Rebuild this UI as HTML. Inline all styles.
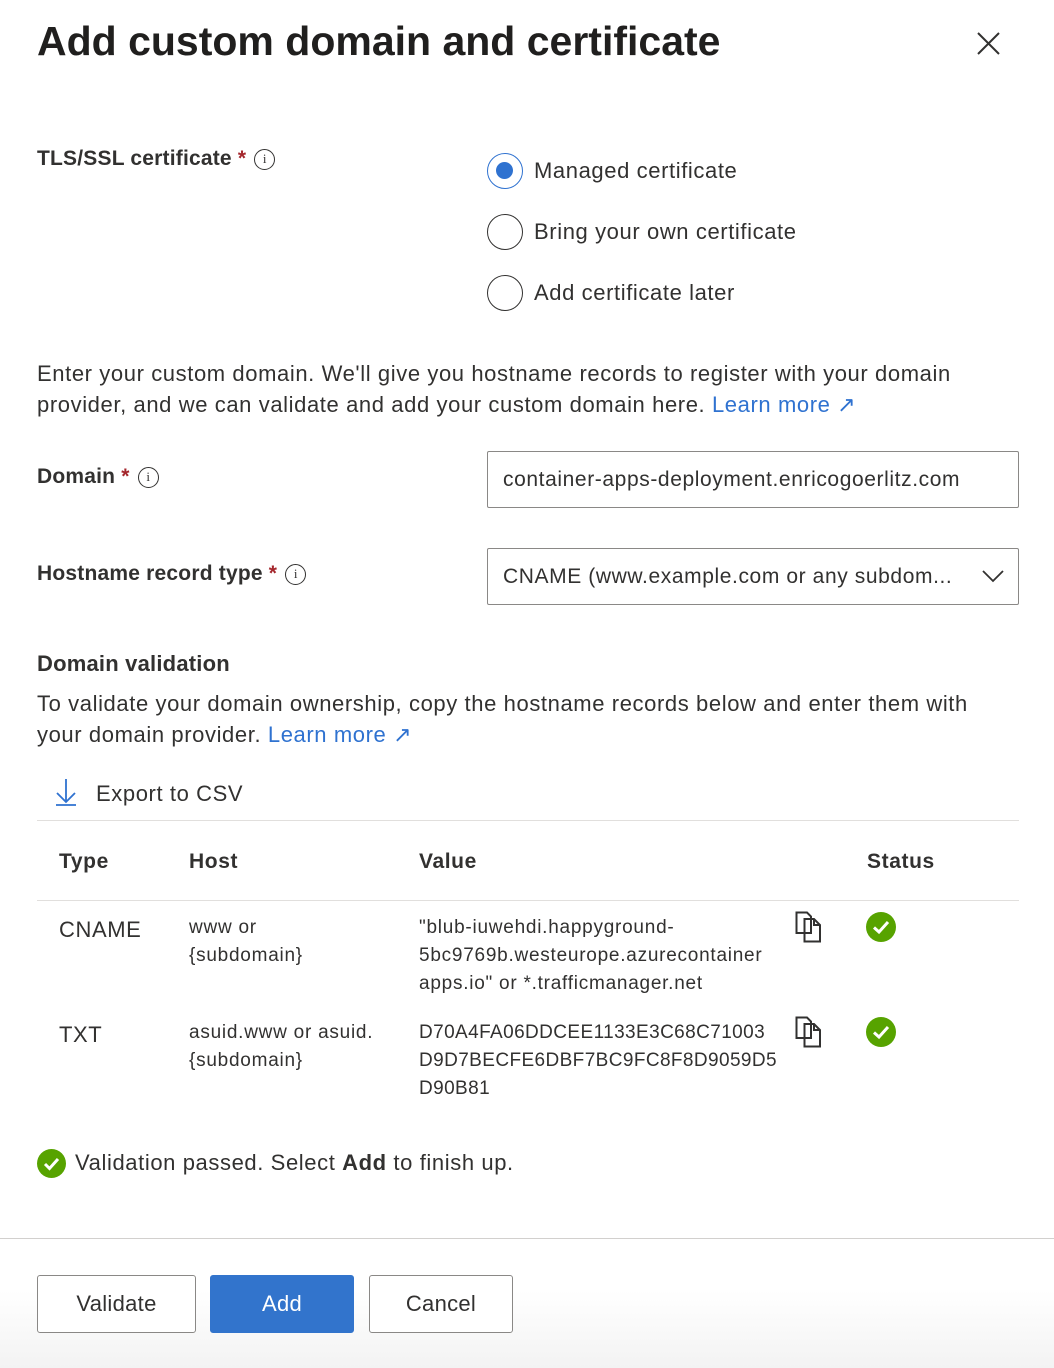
<!DOCTYPE html>
<html><head><meta charset="utf-8"><style>
*{box-sizing:border-box;margin:0;padding:0}
body{width:1054px;height:1368px;background:#fff;font-family:"Liberation Sans",sans-serif;color:#323130;position:relative;overflow:hidden;font-size:22px;letter-spacing:0.6px}
.a{position:absolute;white-space:nowrap}
h1{position:absolute;left:37px;top:18px;font-size:41px;font-weight:bold;color:#201f1e;letter-spacing:0}
.lbl{font-weight:bold;font-size:21px;letter-spacing:0.2px}
.req{color:#a4262c}
.info{display:inline-block;width:21px;height:21px;border:1.5px solid #323130;border-radius:50%;font-size:13px;text-align:center;line-height:18px;vertical-align:2px;margin-left:8px;font-weight:normal;font-family:"Liberation Serif",serif;letter-spacing:0}
.radio{position:absolute;width:36px;height:36px;border:1.5px solid #323130;border-radius:50%}
.radio.on{border-color:#2f72d0}
.radio.on:after{content:"";position:absolute;left:8px;top:8px;width:17px;height:17px;border-radius:50%;background:#2f72d0}
.link{color:#2f72d0}
.box{position:absolute;left:487px;width:532px;height:57px;border:1px solid #8a8886;border-radius:2px;padding:0 15px;line-height:55px;font-size:21px;letter-spacing:0.6px}
.btn{position:absolute;top:1275px;height:58px;border:1px solid #8a8886;border-radius:3px;text-align:center;line-height:56px;font-size:22px;color:#323130;background:#fff;letter-spacing:0.3px}
.chk{position:absolute;width:30px;height:30px;border-radius:50%;background:#57a300}
.chk svg{position:absolute;left:0;top:0}
.sm{font-size:19px;line-height:28px;letter-spacing:0.75px}
.th{font-weight:bold;font-size:21px}
</style></head><body>
<h1>Add custom domain and certificate</h1>
<svg class="a" style="left:976px;top:31px" width="25" height="25"><path d="M2 2L23 23M23 2L2 23" stroke="#323130" stroke-width="2"/></svg>

<div class="a lbl" style="left:37px;top:147px">TLS/SSL certificate <span class="req">*</span><span class="info">i</span></div>
<div class="radio on" style="left:487px;top:153px"></div><div class="a" style="left:534px;top:158px">Managed certificate</div>
<div class="radio" style="left:487px;top:214px"></div><div class="a" style="left:534px;top:219px">Bring your own certificate</div>
<div class="radio" style="left:487px;top:275px"></div><div class="a" style="left:534px;top:280px">Add certificate later</div>

<div class="a" style="left:37px;top:358px;line-height:31px">Enter your custom domain. We'll give you hostname records to register with your domain<br>provider, and we can validate and add your custom domain here. <span class="link">Learn more ↗</span></div>

<div class="a lbl" style="left:37px;top:465px">Domain <span class="req">*</span><span class="info">i</span></div>
<div class="box" style="top:451px">container-apps-deployment.enricogoerlitz.com</div>
<div class="a lbl" style="left:37px;top:562px">Hostname record type <span class="req">*</span><span class="info">i</span></div>
<div class="box" style="top:548px">CNAME (www.example.com or any subdom...</div>
<svg class="a" style="left:982px;top:569px" width="22" height="14"><path d="M1 2L11 12L21 2" stroke="#323130" stroke-width="1.8" fill="none"/></svg>

<div class="a lbl" style="left:37px;top:651px;font-size:22px">Domain validation</div>
<div class="a" style="left:37px;top:688px;line-height:31px">To validate your domain ownership, copy the hostname records below and enter them with<br>your domain provider. <span class="link">Learn more ↗</span></div>

<svg class="a" style="left:55px;top:778px" width="22" height="28"><path d="M11 1V24M2 15L11 24L20 15M1 27H21" stroke="#2f72d0" stroke-width="1.8" fill="none"/></svg>
<div class="a" style="left:96px;top:781px">Export to CSV</div>
<div class="a" style="left:37px;top:820px;width:982px;height:1px;background:#e1dfdd"></div>

<div class="a th" style="left:59px;top:850px">Type</div>
<div class="a th" style="left:189px;top:850px">Host</div>
<div class="a th" style="left:419px;top:850px">Value</div>
<div class="a th" style="left:867px;top:850px">Status</div>
<div class="a" style="left:37px;top:900px;width:982px;height:1px;background:#e1dfdd"></div>

<div class="a" style="left:59px;top:917px">CNAME</div>
<div class="a sm" style="left:189px;top:914px">www or<br>{subdomain}</div>
<div class="a sm" style="left:419px;top:914px">"blub-iuwehdi.happyground-<br>5bc9769b.westeurope.azurecontainer<br>apps.io" or *.trafficmanager.net</div>
<div class="a" style="left:59px;top:1022px">TXT</div>
<div class="a sm" style="left:189px;top:1019px">asuid.www or asuid.<br>{subdomain}</div>
<div class="a sm" style="left:419px;top:1019px;letter-spacing:0.4px">D70A4FA06DDCEE1133E3C68C71003<br>D9D7BECFE6DBF7BC9FC8F8D9059D5<br>D90B81</div>

<svg class="a" style="left:795px;top:911px" width="30" height="32"><path d="M1.5 1.5H12L16 5.5V22H1.5Z M9.5 8H19L25 14V30.5H9.5Z M19 8V14H25" stroke="#323130" stroke-width="2" fill="#fff"/></svg>
<svg class="a" style="left:795px;top:1016px" width="30" height="32"><path d="M1.5 1.5H12L16 5.5V22H1.5Z M9.5 8H19L25 14V30.5H9.5Z M19 8V14H25" stroke="#323130" stroke-width="2" fill="#fff"/></svg>
<div class="chk" style="left:866px;top:912px"><svg width="30" height="30"><path d="M8 15.5L13 20L22 10" stroke="#fff" stroke-width="3" fill="none"/></svg></div>
<div class="chk" style="left:866px;top:1017px"><svg width="30" height="30"><path d="M8 15.5L13 20L22 10" stroke="#fff" stroke-width="3" fill="none"/></svg></div>

<div class="chk" style="left:37px;top:1149px;width:29px;height:29px"><svg width="29" height="29"><path d="M8 15L12.5 19.5L21 10" stroke="#fff" stroke-width="3" fill="none"/></svg></div>
<div class="a" style="left:75px;top:1150px;font-size:22px">Validation passed. Select <b>Add</b> to finish up.</div>

<div class="a" style="left:0;top:1238px;width:1054px;height:1px;background:#d2d0ce"></div>
<div class="a" style="left:0;top:1239px;width:1054px;height:129px;background:linear-gradient(#fff 40%,#f3f3f3)"></div>
<div class="btn" style="left:37px;width:159px">Validate</div>
<div class="btn" style="left:210px;width:144px;background:#3274cc;border-color:#3274cc;color:#fff">Add</div>
<div class="btn" style="left:369px;width:144px">Cancel</div>
</body></html>
